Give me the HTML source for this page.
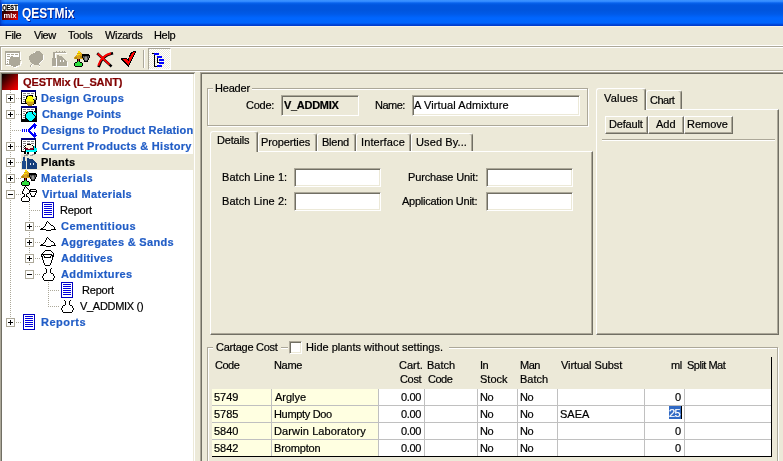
<!DOCTYPE html>
<html>
<head>
<meta charset="utf-8">
<title>QESTMix</title>
<style>
*{box-sizing:border-box;margin:0;padding:0}
html,body{width:783px;height:461px;overflow:hidden;background:#ECE9D8}
body{-webkit-text-stroke:0.2px;position:relative;font-family:"Liberation Sans",sans-serif;font-size:11px;color:#000;line-height:13px}
#app{position:absolute;left:0;top:0;width:783px;height:461px;overflow:hidden;background:#ECE9D8;will-change:transform}
.a{position:absolute;white-space:nowrap}
svg{position:absolute;overflow:visible}
#title{left:0;top:0;width:783px;height:26px;background:linear-gradient(to bottom,#3D95FF 0px,#2F88FF 1.5px,#0762EC 3px,#0055DE 5px,#0055DD 10px,#005AE8 14px,#0066FF 18px,#0065FC 23px,#0048DA 24.5px,#0038C6 26px)}
#title .t{-webkit-text-stroke:0;left:21.5px;top:4px;font-size:14.5px;line-height:18px;font-weight:bold;color:#fff;text-shadow:1px 1px 0 #0A1883;transform-origin:0 0;transform:scaleX(.825)}
.tl{height:16px;line-height:16px}
.b{color:#215DC6}
.dv{width:1px;background-image:linear-gradient(to bottom,#ACA899 50%,transparent 50%);background-size:1px 2px}
.dh{height:1px;background-image:linear-gradient(to right,#ACA899 50%,transparent 50%);background-size:2px 1px}
.pm{width:9px;height:9px;border:1px solid #ACA899;background:#fff}
.pm i{position:absolute;left:1px;top:3px;width:5px;height:1px;background:#000}
.pm b{position:absolute;left:3px;top:1px;width:1px;height:5px;background:#000}
.in{border:1px solid;border-color:#ACA899 #fff #fff #ACA899;background:#fff;box-shadow:inset 1px 1px 0 #716F64,inset -1px -1px 0 #ECE9D8}
.tab{border:1px solid;border-color:#fff #716F64 transparent #fff;border-bottom:0;border-radius:3px 3px 0 0;box-shadow:inset -1px 0 0 #ACA899;background:#ECE9D8}
.pan{border:1px solid;border-color:#fff #716F64 #716F64 #fff;box-shadow:inset -1px -1px 0 #ACA899}
.btn{border:1px solid;border-color:#fff #716F64 #716F64 #fff;box-shadow:inset -1px -1px 0 #ACA899}
.gb{border:1px solid #ACA899;box-shadow:inset 1px 1px 0 #fff,1px 1px 0 #fff}
.th{line-height:14px}
.td{height:16px;line-height:16px}
</style>
</head>
<body>
<div id="app">

<div id="title" class="a">
<div class="a" style="left:0;top:0;width:5px;height:26px;background:linear-gradient(to right,rgba(0,25,150,.6) 0,rgba(0,40,180,.25) 2px,rgba(0,40,180,0) 5px)"></div>
<div class="a" style="left:2px;top:4px;width:16px;height:7px;background:#fff"></div>
<div class="a" style="left:2px;top:11px;width:16px;height:9px;background:linear-gradient(135deg,#200000 0%,#700000 45%,#F00000 100%)"></div>
<svg style="left:2px;top:4px" width="16" height="16" viewBox="0 0 16 16">
<text x="0.2" y="6.2" font-family="Liberation Sans,sans-serif" font-weight="bold" font-size="7" fill="#000" stroke="#000" stroke-width="0.3" textLength="15.4" lengthAdjust="spacingAndGlyphs">QEST</text>
<text x="1.5" y="14" font-family="Liberation Sans,sans-serif" font-weight="bold" font-size="7.5" fill="#fff" textLength="13" lengthAdjust="spacingAndGlyphs">mix</text>
</svg>
<div class="a t">QESTMix</div>
</div>

<div class="a" style="left:0px;top:26px;width:783px;height:1px;background:#F6F4EA"></div>
<div class="a" style="left:5px;top:29px;letter-spacing:-0.33px;">File</div>
<div class="a" style="left:34px;top:29px;letter-spacing:-0.50px;">View</div>
<div class="a" style="left:68px;top:29px;letter-spacing:-0.25px;">Tools</div>
<div class="a" style="left:105px;top:29px;letter-spacing:-0.33px;">Wizards</div>
<div class="a" style="left:154px;top:29px;letter-spacing:-0.33px;">Help</div>
<div class="a" style="left:0px;top:45px;width:783px;height:1px;background:#FFFFFF"></div>
<div class="a" style="left:0px;top:46px;width:783px;height:1px;background:#ACA899"></div>
<div class="a" style="left:1px;top:47px;width:782px;height:1px;background:#FFFFFF"></div>
<div class="a" style="left:0px;top:46px;width:1px;height:25px;background:#ACA899"></div>
<div class="a" style="left:1px;top:47px;width:1px;height:23px;background:#FFFFFF"></div>
<div class="a" style="left:0px;top:70px;width:783px;height:1px;background:#ACA899"></div>
<div class="a" style="left:0px;top:71px;width:783px;height:1px;background:#FFFFFF"></div>
<svg style="left:5px;top:51px" width="17" height="17" viewBox="0 0 17 17" shape-rendering="crispEdges">
<path d="M1 1h15v14h-15z" fill="#fff"/>
<path d="M6 6h6v1h2v1h1v1h1v3h-1v2h-2v1h-2v1h-3v-1h-2v-2h-2v-5h2v-1h1z" fill="#fff" transform="translate(1,1)"/>
<rect x="0" y="0" width="15" height="14" fill="#ACA899"/>
<rect x="1" y="2" width="13" height="11" fill="#fff"/>
<path d="M2 3h3v1h-3zM6 3h3v1h-3zM10 3h3v1h-3zM2 5h3v1h-3zM6 5h2v1h-2zM5 6h9v7h-9zM2 8h2v1h-2zM2 10h1v1h-1zM2 12h1v1h-1z" fill="#ACA899"/>
<path d="M6 6h6v1h2v1h1v1h1v3h-1v2h-2v1h-2v1h-3v-1h-2v-2h-2v-5h2v-1h1z" fill="#ACA899"/>
<path d="M15 10h1v2h-1zM13 14h2v1h-2z" fill="#ECE9D8"/>
</svg>
<svg style="left:28px;top:51px" width="16" height="17" viewBox="0 0 16 17" shape-rendering="crispEdges">
<path d="M6 1h6v1h2v1h1v1h1v5h-1v1h-1v1h-1v1h-1v1h-1v1h1v2h-1v-2h-1v-1h-5v1h-1v2h-1v-2h1v-2h-1v-2h-1v-5h1v-1h2v-1h2z" fill="#fff"/>
<path d="M7 0h5v1h1v1h1v1h1v6h-1v1h-1v1h-1v1h-1v1h-1v1h-4v-1h-2v-1h-1v-1h-1v-2h-1v-4h1v-1h1v-1h2v-1h2v-1h1z" fill="#ACA899"/>
<path d="M3 13h1v1h-1zM2 14h1v2h-1zM10 13h1v1h-1zM11 14h1v1h-1z" fill="#ACA899"/>
</svg>
<svg style="left:52px;top:51px" width="17" height="17" viewBox="0 0 17 17" shape-rendering="crispEdges">
<path d="M1 1h2v7h-2zM0 7h4v8h-4zM3 1h11v1h-11zM4 0h1v1h-1zM7 0h1v1h-1zM10 0h1v1h-1zM12 0h1v1h-1zM5 4h2v1h3v1h1v1h1v1h1v1h1v1h1v5h-10z" fill="#fff" transform="translate(1,1)"/>
<path d="M1 1h2v7h-2zM0 7h4v8h-4zM3 1h11v1h-11zM4 0h1v1h-1zM7 0h1v1h-1zM10 0h1v1h-1zM12 0h1v1h-1zM5 4h2v1h3v1h1v1h1v1h1v1h1v1h1v5h-10z" fill="#ACA899"/>
<path d="M8 9h1v2h-1zM11 9h1v2h-1z" fill="#fff"/>
</svg>
<svg style="left:74px;top:51px" width="16" height="16" viewBox="0 0 16 16" shape-rendering="crispEdges">
<path d="M4 0h2v1h1v1h1v2h1v1h1v3h-10v-2h1v-1h1v-1h1v-2h1z" fill="#D8A020"/><path d="M3 4h1v1h-1zM6 2h1v1h-1zM7 5h1v1h-1z" fill="#F0D000"/>
<path d="M4 0h2v2h-2zM3 3h3v1h-3z" fill="#FFE000"/>
<path d="M1 6h2v2h-2zM6 5h2v2h-2z" fill="#B08810"/>
<path d="M8 3h7v1h1v3h-1v2h-1v2h-4v-2h-1v-2h-1z" fill="#000"/><path d="M9 5h6v2h-1v2h-1v1h-2v-1h-1v-2h-1z" fill="#606060"/><path d="M11 6h2v3h-2z" fill="#989898"/><path d="M10 5h1v1h-1zM13 5h1v2h-1z" fill="#303030"/>
<path d="M3 8h3v3h2v1h1v3h-1v1h-7v-1h-1v-3h1v-1h2z" fill="#000"/>
<path d="M4 10h1v1h1v1h2v3h-7v-3h2v-1h1z" fill="#30E040"/>
<path d="M4 8h1v2h-1z" fill="#C02020"/>
</svg>
<svg style="left:96px;top:51px" width="18" height="17" viewBox="0 0 18 17">
<path d="M2.2 3.2L14.6 14.6M15.8 2.6C9.5 4 5 8.5 3 15" stroke="#000" stroke-width="2.6" fill="none" stroke-linecap="square"/>
<path d="M1.8 2.6L13.6 13.6M15 2.2C9 3.6 4.4 8 2.3 14.6" stroke="#F00" stroke-width="1.9" fill="none" stroke-linecap="butt"/>
</svg>
<svg style="left:121px;top:51px" width="15" height="16" viewBox="0 0 16 16" preserveAspectRatio="none" shape-rendering="crispEdges">
<path d="M13 0h3v2h-1v2h-1v2h-1v2h-1v2h-1v2h-1v2h-1v2h-2v-1h-1v-1h-1v-1h-1v-1h-1v-1h-1v-1h-1v-1h-1v-2h6v1h1v-1h1v-2h1v-1h1v-2h1v-1h1z" fill="#000"/>
<path d="M13 1h2v1h-1v2h-1v2h-1v2h-1v2h-1v2h-1v2h-2v-1h-1v-1h-1v-1h-1v-1h-1v-1h-1v-1h4v1h1v1h1v-2h1v-2h1v-1h1v-2h1v-1h1z" fill="#F00"/>
</svg>
<div class="a" style="left:143px;top:50px;width:1px;height:18px;background:#ACA899"></div>
<div class="a" style="left:144px;top:50px;width:1px;height:18px;background:#fff"></div>
<div class="a" style="left:148px;top:48px;width:23px;height:22px;border:1px solid;border-color:#ACA899 #fff #fff #ACA899;background-color:#ECE9D8;background-image:linear-gradient(45deg,#fff 25%,transparent 25%,transparent 75%,#fff 75%),linear-gradient(45deg,#fff 25%,transparent 25%,transparent 75%,#fff 75%);background-size:2px 2px;background-position:0 0,1px 1px"></div>
<svg style="left:152px;top:53px" width="14" height="14" viewBox="0 0 14 14" shape-rendering="crispEdges">
<path d="M0 0h2v1h-2zM2 0h1v14h-1zM3 13h2v1h-2zM5 4h1v6h-1zM6 9h1v1h-1z" fill="#000"/>
<path d="M2 0h5v2h-5zM5 3h5v2h-5zM7 6h5v2h-5zM7 9h5v2h-5zM5 12h5v2h-5z" fill="#00F"/>
</svg>

<div class="a" style="left:0px;top:72px;width:195px;height:389px;background:#fff;border-top:2px solid;border-left:2px solid;border-right:1px solid #fff;border-color:#716F64 #fff #716F64 #716F64"></div>
<div class="a" style="left:0px;top:72px;width:195px;height:1px;background:#ACA899"></div>
<div class="a" style="left:0px;top:72px;width:1px;height:389px;background:#ACA899"></div>
<div class="a" style="left:193px;top:74px;width:1px;height:387px;background:#ECE9D8"></div>
<div class="a dv" style="left:10px;top:90px;width:1px;height:228px;"></div>
<div class="a dv" style="left:29px;top:202px;width:1px;height:64px;"></div>
<div class="a dv" style="left:48px;top:282px;width:1px;height:25px;"></div>
<div class="a dh" style="left:16px;top:98px;width:5px;height:1px;"></div>
<div class="a dh" style="left:16px;top:114px;width:5px;height:1px;"></div>
<div class="a dh" style="left:12px;top:130px;width:9px;height:1px;"></div>
<div class="a dh" style="left:16px;top:146px;width:5px;height:1px;"></div>
<div class="a dh" style="left:16px;top:162px;width:5px;height:1px;"></div>
<div class="a dh" style="left:16px;top:178px;width:5px;height:1px;"></div>
<div class="a dh" style="left:16px;top:194px;width:5px;height:1px;"></div>
<div class="a dh" style="left:16px;top:322px;width:5px;height:1px;"></div>
<div class="a dh" style="left:31px;top:210px;width:9px;height:1px;"></div>
<div class="a dh" style="left:35px;top:226px;width:5px;height:1px;"></div>
<div class="a dh" style="left:35px;top:242px;width:5px;height:1px;"></div>
<div class="a dh" style="left:35px;top:258px;width:5px;height:1px;"></div>
<div class="a dh" style="left:35px;top:274px;width:5px;height:1px;"></div>
<div class="a dh" style="left:50px;top:290px;width:9px;height:1px;"></div>
<div class="a dh" style="left:50px;top:306px;width:9px;height:1px;"></div>
<div class="a pm" style="left:6px;top:94px"><i></i><b></b></div>
<div class="a pm" style="left:6px;top:110px"><i></i><b></b></div>
<div class="a pm" style="left:6px;top:142px"><i></i><b></b></div>
<div class="a pm" style="left:6px;top:158px"><i></i><b></b></div>
<div class="a pm" style="left:6px;top:174px"><i></i><b></b></div>
<div class="a pm" style="left:6px;top:318px"><i></i><b></b></div>
<div class="a pm" style="left:6px;top:190px"><i></i></div>
<div class="a pm" style="left:25px;top:222px"><i></i><b></b></div>
<div class="a pm" style="left:25px;top:238px"><i></i><b></b></div>
<div class="a pm" style="left:25px;top:254px"><i></i><b></b></div>
<div class="a pm" style="left:25px;top:270px"><i></i></div>
<div class="a" style="left:21px;top:154px;width:172px;height:16px;background:#ECE9D8"></div>
<div class="a" style="left:2px;top:74px;width:16px;height:16px;background:linear-gradient(135deg,#000 0%,#5A0000 35%,#B00000 65%,#FF0000 100%)"></div>
<svg style="left:21px;top:90px" width="16" height="16" viewBox="0 0 16 16" shape-rendering="crispEdges"><path d="M0 0h15v1h-15zM0 1h15v1h-15z" fill="#000080"/><path d="M0 2h1v1h-1zM14 2h1v1h-1zM0 3h1v1h-1zM14 3h1v1h-1zM0 4h1v1h-1zM14 4h1v1h-1zM0 5h1v1h-1zM8 5h4v1h-4zM14 5h1v1h-1zM0 6h1v1h-1zM5 6h2v1h-2zM11 6h1v1h-1zM14 6h2v1h-2zM0 7h1v1h-1zM5 7h1v1h-1zM15 7h1v1h-1zM0 8h1v1h-1zM5 8h1v1h-1zM15 8h1v1h-1zM0 9h1v1h-1zM4 9h1v1h-1zM12 9h1v1h-1zM15 9h1v1h-1zM0 10h1v1h-1zM4 10h1v1h-1zM13 10h2v1h-2zM0 11h1v1h-1zM4 11h1v1h-1zM13 11h2v1h-2zM0 12h1v1h-1zM4 12h1v1h-1zM13 12h2v1h-2zM0 13h6v1h-6zM13 13h2v1h-2zM12 14h1v1h-1z" fill="#000"/><path d="M1 2h13v1h-13zM1 3h1v1h-1zM5 3h1v1h-1zM9 3h1v1h-1zM13 3h1v1h-1zM1 4h13v1h-13zM1 5h1v1h-1zM5 5h1v1h-1zM12 5h2v1h-2zM1 6h4v1h-4zM13 6h1v1h-1zM1 7h1v1h-1zM4 7h1v1h-1zM1 8h4v1h-4zM1 9h1v1h-1zM1 10h3v1h-3zM1 11h1v1h-1zM1 12h3v1h-3z" fill="#fff"/><path d="M2 3h3v1h-3zM6 3h3v1h-3zM10 3h3v1h-3zM2 5h3v1h-3zM6 5h2v1h-2zM2 7h2v1h-2zM2 9h2v1h-2zM2 11h2v1h-2z" fill="#808080"/><path d="M7 6h4v1h-4zM6 7h6v1h-6zM6 8h6v1h-6zM5 9h7v1h-7zM5 10h8v1h-8z" fill="#FFFF00"/><path d="M12 6h1v1h-1zM12 7h3v1h-3zM12 8h2v1h-2z" fill="#FFFF99"/><path d="M14 8h1v1h-1zM13 9h2v1h-2z" fill="#A0A0A0"/><path d="M5 11h8v1h-8z" fill="#F0D818"/><path d="M5 12h8v1h-8zM6 13h7v1h-7z" fill="#D0A818"/><path d="M6 14h6v1h-6zM7 15h4v1h-4z" fill="#B08810"/></svg>
<svg style="left:21px;top:106px" width="16" height="16" viewBox="0 0 16 16" shape-rendering="crispEdges"><path d="M0 0h16v1h-16zM0 1h16v1h-16z" fill="#000080"/><path d="M0 2h1v1h-1zM14 2h2v1h-2zM0 3h1v1h-1zM14 3h2v1h-2zM0 4h1v1h-1zM14 4h2v1h-2zM0 5h1v1h-1zM8 5h4v1h-4zM13 5h3v1h-3zM0 6h1v1h-1zM5 6h2v1h-2zM11 6h1v1h-1zM14 6h2v1h-2zM0 7h1v1h-1zM5 7h1v1h-1zM11 7h1v1h-1zM15 7h1v1h-1zM0 8h1v1h-1zM4 8h1v1h-1zM12 8h1v1h-1zM15 8h1v1h-1zM0 9h1v1h-1zM4 9h1v1h-1zM13 9h1v1h-1zM15 9h1v1h-1zM0 10h1v1h-1zM4 10h1v1h-1zM14 10h2v1h-2zM0 11h1v1h-1zM4 11h1v1h-1zM14 11h2v1h-2zM0 12h1v1h-1zM4 12h2v1h-2zM13 12h3v1h-3zM0 13h7v1h-7zM12 13h4v1h-4zM0 14h8v1h-8zM11 14h5v1h-5zM0 15h16v1h-16z" fill="#000"/><path d="M1 2h13v1h-13zM1 3h1v1h-1zM5 3h1v1h-1zM9 3h1v1h-1zM13 3h1v1h-1zM1 4h13v1h-13zM1 5h1v1h-1zM5 5h1v1h-1zM12 5h1v1h-1zM1 6h4v1h-4zM1 7h1v1h-1zM4 7h1v1h-1zM1 8h3v1h-3zM1 9h1v1h-1zM1 10h3v1h-3zM1 11h1v1h-1zM1 12h3v1h-3z" fill="#fff"/><path d="M2 3h3v1h-3zM6 3h3v1h-3zM10 3h3v1h-3zM2 5h3v1h-3zM6 5h2v1h-2zM2 7h2v1h-2zM2 9h2v1h-2zM2 11h2v1h-2z" fill="#808080"/><path d="M7 6h4v1h-4zM12 6h2v1h-2zM6 7h5v1h-5zM12 7h3v1h-3zM5 8h7v1h-7zM13 8h2v1h-2zM5 9h8v1h-8zM5 10h9v1h-9zM5 11h9v1h-9zM6 12h7v1h-7zM7 13h5v1h-5zM8 14h3v1h-3z" fill="#00FFFF"/><path d="M14 9h1v1h-1z" fill="#A0A0A0"/></svg>
<svg style="left:21px;top:122px" width="16" height="16" viewBox="0 0 16 16" shape-rendering="crispEdges"><path d="M13 1h1v1h-1zM12 2h3v1h-3zM11 3h5v1h-5zM10 4h5v1h-5zM9 5h3v1h-3zM13 5h2v1h-2zM8 6h3v1h-3zM13 6h1v1h-1zM1 7h1v1h-1zM3 7h1v1h-1zM5 7h1v1h-1zM7 7h3v1h-3zM1 8h1v1h-1zM3 8h1v1h-1zM5 8h1v1h-1zM7 8h2v1h-2zM1 9h1v1h-1zM3 9h1v1h-1zM5 9h1v1h-1zM7 9h3v1h-3zM8 10h3v1h-3zM13 10h1v1h-1zM9 11h3v1h-3zM13 11h2v1h-2zM10 12h5v1h-5zM11 13h5v1h-5zM12 14h3v1h-3zM13 15h1v1h-1z" fill="#00F"/></svg>
<svg style="left:21px;top:138px" width="16" height="16" viewBox="0 0 16 16" shape-rendering="crispEdges"><path d="M0 0h15v1h-15zM0 1h15v1h-15z" fill="#000080"/><path d="M0 2h1v1h-1zM14 2h1v1h-1zM0 3h1v1h-1zM14 3h1v1h-1zM0 4h1v1h-1zM14 4h1v1h-1zM0 5h1v1h-1zM14 5h1v1h-1zM0 6h1v1h-1zM6 6h4v1h-4zM14 6h1v1h-1zM0 7h1v1h-1zM4 7h1v1h-1zM11 7h1v1h-1zM14 7h1v1h-1zM0 8h1v1h-1zM3 8h1v1h-1zM12 8h1v1h-1zM14 8h1v1h-1zM0 9h1v1h-1zM4 9h1v1h-1zM12 9h1v1h-1zM14 9h1v1h-1zM0 10h1v1h-1zM3 10h1v1h-1zM0 11h1v1h-1zM4 11h1v1h-1zM12 11h1v1h-1zM0 12h1v1h-1zM4 12h1v1h-1zM0 13h5v1h-5zM15 13h1v1h-1zM3 14h2v1h-2zM6 14h2v1h-2zM13 14h2v1h-2zM3 15h2v1h-2zM6 15h2v1h-2zM13 15h2v1h-2z" fill="#000"/><path d="M1 2h13v1h-13zM1 3h1v1h-1zM5 3h1v1h-1zM9 3h1v1h-1zM13 3h1v1h-1zM1 4h13v1h-13zM1 5h1v1h-1zM5 5h1v1h-1zM9 5h1v1h-1zM13 5h1v1h-1zM1 6h5v1h-5zM10 6h4v1h-4zM1 7h1v1h-1zM3 7h1v1h-1zM12 7h2v1h-2zM1 8h2v1h-2zM1 9h1v1h-1zM3 9h1v1h-1zM1 10h2v1h-2zM1 11h1v1h-1zM3 11h1v1h-1zM1 12h3v1h-3z" fill="#fff"/><path d="M2 3h3v1h-3zM6 3h3v1h-3zM10 3h3v1h-3zM2 5h3v1h-3zM6 5h3v1h-3zM10 5h3v1h-3zM2 7h1v1h-1zM2 9h1v1h-1zM2 11h1v1h-1z" fill="#808080"/><path d="M5 7h6v1h-6zM4 8h8v1h-8zM5 9h7v1h-7zM7 10h2v1h-2z" fill="#FFF4DC"/><path d="M13 8h1v1h-1zM13 9h1v1h-1zM13 10h3v1h-3zM13 11h3v1h-3zM5 12h11v1h-11zM5 13h10v1h-10z" fill="#00FFFF"/><path d="M4 10h3v1h-3zM9 10h4v1h-4zM5 11h7v1h-7z" fill="#800028"/></svg>
<svg style="left:21px;top:154px" width="16" height="16" viewBox="0 0 16 16" shape-rendering="crispEdges"><path d="M3 1h2v-1h3v1h3v-1h3v1h-2v1h-3v-1h-2v1h-3v1h-1z" fill="#A0A0A0"/><path d="M2 3h2v4h1v8h-4v-8h1z" fill="#1C4A8C"/><path d="M6 4h2v1h4v1h1v1h1v1h1v1h1v6h-10z" fill="#153E7A"/><path d="M9 9h1v2h-1zM12 9h1v2h-1z" fill="#E0E8F0"/></svg>
<svg style="left:21px;top:170px" width="16" height="16" viewBox="0 0 16 16" shape-rendering="crispEdges"><path d="M4 0h2v1h1v1h1v2h1v1h1v3h-10v-2h1v-1h1v-1h1v-2h1z" fill="#D8A020"/><path d="M3 4h1v1h-1zM6 2h1v1h-1zM7 5h1v1h-1z" fill="#F0D000"/><path d="M4 0h2v2h-2zM3 3h3v1h-3z" fill="#FFE000"/><path d="M1 6h2v2h-2zM6 5h2v2h-2z" fill="#B08810"/><path d="M8 3h7v1h1v3h-1v2h-1v2h-4v-2h-1v-2h-1z" fill="#000"/><path d="M9 5h6v2h-1v2h-1v1h-2v-1h-1v-2h-1z" fill="#606060"/><path d="M11 6h2v3h-2z" fill="#989898"/><path d="M10 5h1v1h-1zM13 5h1v2h-1z" fill="#303030"/><path d="M3 8h3v3h2v1h1v3h-1v1h-7v-1h-1v-3h1v-1h2z" fill="#000"/><path d="M4 10h1v1h1v1h2v3h-7v-3h2v-1h1z" fill="#30E040"/><path d="M4 8h1v2h-1z" fill="#C02020"/></svg>
<svg style="left:21px;top:186px" width="16" height="16" viewBox="0 0 16 16" shape-rendering="crispEdges"><path d="M4 0h1v1h-1zM3 1h1v1h-1zM5 1h1v1h-1zM3 2h1v1h-1zM6 2h1v1h-1zM2 3h1v1h-1zM7 3h1v1h-1zM9 3h6v1h-6zM2 4h1v1h-1zM8 4h2v1h-2zM15 4h1v1h-1zM1 5h1v1h-1zM8 5h8v1h-8zM1 6h1v1h-1zM8 6h1v1h-1zM15 6h1v1h-1zM1 7h2v1h-2zM6 7h2v1h-2zM9 7h1v1h-1zM14 7h1v1h-1zM3 8h1v1h-1zM5 8h1v1h-1zM9 8h1v1h-1zM14 8h1v1h-1zM3 9h1v1h-1zM5 9h1v1h-1zM10 9h1v1h-1zM13 9h1v1h-1zM2 10h2v1h-2zM5 10h2v1h-2zM10 10h4v1h-4zM1 11h1v1h-1zM7 11h1v1h-1zM0 12h1v1h-1zM8 12h1v1h-1zM0 13h1v1h-1zM8 13h1v1h-1zM0 14h1v1h-1zM8 14h1v1h-1zM1 15h7v1h-7z" fill="#000"/></svg>
<svg style="left:42px;top:202px" width="12" height="16" viewBox="0 0 12 16" shape-rendering="crispEdges"><rect x="0" y="0" width="12" height="16" fill="#0000C0"/><rect x="1" y="1" width="10" height="14" fill="#fff"/><rect x="2" y="2" width="8" height="1" fill="#0000E0"/><rect x="2" y="4" width="8" height="1" fill="#0000E0"/><rect x="2" y="6" width="8" height="1" fill="#0000E0"/><rect x="2" y="8" width="8" height="1" fill="#0000E0"/><rect x="2" y="10" width="8" height="1" fill="#0000E0"/><rect x="2" y="12" width="8" height="1" fill="#0000E0"/></svg>
<svg style="left:61px;top:282px" width="12" height="16" viewBox="0 0 12 16" shape-rendering="crispEdges"><rect x="0" y="0" width="12" height="16" fill="#0000C0"/><rect x="1" y="1" width="10" height="14" fill="#fff"/><rect x="2" y="2" width="8" height="1" fill="#0000E0"/><rect x="2" y="4" width="8" height="1" fill="#0000E0"/><rect x="2" y="6" width="8" height="1" fill="#0000E0"/><rect x="2" y="8" width="8" height="1" fill="#0000E0"/><rect x="2" y="10" width="8" height="1" fill="#0000E0"/><rect x="2" y="12" width="8" height="1" fill="#0000E0"/></svg>
<svg style="left:23px;top:314px" width="12" height="16" viewBox="0 0 12 16" shape-rendering="crispEdges"><rect x="0" y="0" width="12" height="16" fill="#0000C0"/><rect x="1" y="1" width="10" height="14" fill="#fff"/><rect x="2" y="2" width="8" height="1" fill="#0000E0"/><rect x="2" y="4" width="8" height="1" fill="#0000E0"/><rect x="2" y="6" width="8" height="1" fill="#0000E0"/><rect x="2" y="8" width="8" height="1" fill="#0000E0"/><rect x="2" y="10" width="8" height="1" fill="#0000E0"/><rect x="2" y="12" width="8" height="1" fill="#0000E0"/></svg>
<svg style="left:40px;top:221px" width="16" height="10" viewBox="0 0 16 10" shape-rendering="crispEdges"><path d="M7 0h1v1h-1zM6 1h1v1h-1zM8 1h1v1h-1zM6 2h1v1h-1zM9 2h1v1h-1zM5 3h1v1h-1zM10 3h1v1h-1zM5 4h1v1h-1zM11 4h2v1h-2zM4 5h1v1h-1zM13 5h1v1h-1zM3 6h1v1h-1zM14 6h1v1h-1zM1 7h2v1h-2zM14 7h1v1h-1zM0 8h6v1h-6zM11 8h5v1h-5zM6 9h5v1h-5z" fill="#000"/></svg>
<svg style="left:40px;top:237px" width="16" height="10" viewBox="0 0 16 10" shape-rendering="crispEdges"><path d="M7 0h1v1h-1zM6 1h1v1h-1zM8 1h1v1h-1zM6 2h1v1h-1zM9 2h1v1h-1zM5 3h1v1h-1zM10 3h1v1h-1zM5 4h1v1h-1zM11 4h2v1h-2zM4 5h1v1h-1zM13 5h1v1h-1zM3 6h1v1h-1zM14 6h1v1h-1zM1 7h2v1h-2zM14 7h1v1h-1zM0 8h6v1h-6zM11 8h5v1h-5zM6 9h5v1h-5z" fill="#000"/></svg>
<svg style="left:41px;top:250px" width="13" height="16" viewBox="0 0 13 16" shape-rendering="crispEdges"><path d="M4 0h6v1h-6zM3 1h1v1h-1zM10 1h1v1h-1zM2 2h1v1h-1zM11 2h1v1h-1zM1 3h1v1h-1zM12 3h1v1h-1zM0 4h11v1h-11zM12 4h1v1h-1zM0 5h1v1h-1zM2 5h1v1h-1zM10 5h3v1h-3zM0 6h2v1h-2zM3 6h1v1h-1zM9 6h1v1h-1zM11 6h2v1h-2zM1 7h1v1h-1zM3 7h7v1h-7zM11 7h1v1h-1zM1 8h1v1h-1zM11 8h1v1h-1zM1 9h1v1h-1zM11 9h1v1h-1zM2 10h1v1h-1zM10 10h1v1h-1zM2 11h1v1h-1zM10 11h1v1h-1zM2 12h1v1h-1zM10 12h1v1h-1zM3 13h1v1h-1zM9 13h1v1h-1zM3 14h1v1h-1zM9 14h1v1h-1zM4 15h5v1h-5z" fill="#000"/></svg>
<svg style="left:42px;top:268px" width="13" height="13" viewBox="0 0 13 13" shape-rendering="crispEdges"><path d="M3 0h1v1h-1zM9 0h1v1h-1zM4 1h1v1h-1zM8 1h1v1h-1zM4 2h1v1h-1zM8 2h1v1h-1zM4 3h1v1h-1zM8 3h1v1h-1zM4 4h1v1h-1zM8 4h1v1h-1zM2 5h2v1h-2zM9 5h2v1h-2zM1 6h1v1h-1zM11 6h1v1h-1zM1 7h1v1h-1zM11 7h1v1h-1zM0 8h1v1h-1zM12 8h1v1h-1zM0 9h1v1h-1zM12 9h1v1h-1zM1 10h1v1h-1zM11 10h1v1h-1zM1 11h1v1h-1zM11 11h1v1h-1zM2 12h9v1h-9z" fill="#000"/></svg>
<svg style="left:61px;top:300px" width="13" height="13" viewBox="0 0 13 13" shape-rendering="crispEdges"><path d="M3 0h1v1h-1zM9 0h1v1h-1zM4 1h1v1h-1zM8 1h1v1h-1zM4 2h1v1h-1zM8 2h1v1h-1zM4 3h1v1h-1zM8 3h1v1h-1zM4 4h1v1h-1zM8 4h1v1h-1zM2 5h2v1h-2zM9 5h2v1h-2zM1 6h1v1h-1zM11 6h1v1h-1zM1 7h1v1h-1zM11 7h1v1h-1zM0 8h1v1h-1zM12 8h1v1h-1zM0 9h1v1h-1zM12 9h1v1h-1zM1 10h1v1h-1zM11 10h1v1h-1zM1 11h1v1h-1zM11 11h1v1h-1zM2 12h9v1h-9z" fill="#000"/></svg>

<div class="a tl b" style="left:23px;top:74px;letter-spacing:-0.13px;font-weight:bold;color:#800000">QESTMix (L_SANT)</div>
<div class="a tl b" style="left:41px;top:90px;letter-spacing:0.33px;font-weight:bold;">Design Groups</div>
<div class="a tl b" style="left:42px;top:106px;letter-spacing:0.17px;font-weight:bold;">Change Points</div>
<div class="a tl b" style="left:41px;top:122px;letter-spacing:0.19px;font-weight:bold;">Designs to Product Relation</div>
<div class="a tl b" style="left:42px;top:138px;letter-spacing:0.28px;font-weight:bold;">Current Products &amp; History</div>
<div class="a tl b" style="left:41px;top:154px;letter-spacing:0.20px;font-weight:bold;color:#000">Plants</div>
<div class="a tl b" style="left:41px;top:170px;letter-spacing:0.50px;font-weight:bold;">Materials</div>
<div class="a tl b" style="left:42px;top:186px;letter-spacing:0.31px;font-weight:bold;">Virtual Materials</div>
<div class="a tl" style="left:60px;top:202px;letter-spacing:-0.20px;">Report</div>
<div class="a tl b" style="left:61px;top:218px;letter-spacing:0.45px;font-weight:bold;">Cementitious</div>
<div class="a tl b" style="left:61px;top:234px;letter-spacing:0.29px;font-weight:bold;">Aggregates &amp; Sands</div>
<div class="a tl b" style="left:61px;top:250px;letter-spacing:0.25px;font-weight:bold;">Additives</div>
<div class="a tl b" style="left:61px;top:266px;letter-spacing:0.40px;font-weight:bold;">Addmixtures</div>
<div class="a tl" style="left:82px;top:282px;letter-spacing:-0.20px;">Report</div>
<div class="a tl" style="left:80px;top:298px;letter-spacing:-0.30px;">V_ADDMIX ()</div>
<div class="a tl b" style="left:41px;top:314px;letter-spacing:0.50px;font-weight:bold;">Reports</div>
<div class="a" style="left:200px;top:72px;width:583px;height:1px;background:#ACA899"></div>
<div class="a" style="left:201px;top:73px;width:582px;height:1px;background:#716F64"></div>
<div class="a" style="left:200px;top:72px;width:1px;height:389px;background:#ACA899"></div>
<div class="a" style="left:201px;top:73px;width:1px;height:388px;background:#716F64"></div>
<div class="a gb" style="left:207px;top:88px;width:381px;height:38px;"></div>
<div class="a" style="left:213px;top:84px;width:39px;height:10px;background:#ECE9D8"></div>
<div class="a" style="left:215px;top:82px;letter-spacing:-0.20px;">Header</div>
<div class="a" style="left:246px;top:99px;letter-spacing:-0.25px;">Code:</div>
<div class="a in" style="left:281px;top:95px;width:78px;height:21px;background:#ECE9D8"></div>
<div class="a" style="left:284px;top:99px;letter-spacing:-0.29px;font-weight:bold;">V_ADDMIX</div>
<div class="a" style="left:375px;top:99px;letter-spacing:-0.50px;">Name:</div>
<div class="a in" style="left:412px;top:95px;width:168px;height:21px;"></div>
<div class="a" style="left:414px;top:99px;letter-spacing:0.11px;">A Virtual Admixture</div>
<div class="a pan" style="left:210px;top:151px;width:383px;height:184px;"></div>
<div class="a tab" style="left:258px;top:133px;width:59px;height:18px;"></div>
<div class="a" style="left:261px;top:136px;letter-spacing:-0.11px;">Properties</div>
<div class="a tab" style="left:317px;top:133px;width:39px;height:18px;"></div>
<div class="a" style="left:322px;top:136px;letter-spacing:-0.25px;">Blend</div>
<div class="a tab" style="left:356px;top:133px;width:55px;height:18px;"></div>
<div class="a" style="left:361px;top:136px;letter-spacing:0.12px;">Interface</div>
<div class="a tab" style="left:411px;top:133px;width:62px;height:18px;"></div>
<div class="a" style="left:416px;top:136px;letter-spacing:0.11px;">Used By...</div>
<div class="a tab" style="left:210px;top:131px;width:48px;height:21px;"></div>
<div class="a" style="left:217px;top:134px;letter-spacing:-0.17px;">Details</div>
<div class="a" style="left:222px;top:171px;letter-spacing:0.08px;">Batch Line 1:</div>
<div class="a" style="left:222px;top:195px;letter-spacing:0.08px;">Batch Line 2:</div>
<div class="a in" style="left:294px;top:168px;width:87px;height:19px;"></div>
<div class="a in" style="left:294px;top:192px;width:87px;height:19px;"></div>
<div class="a" style="left:408px;top:171px;letter-spacing:-0.15px;">Purchase Unit:</div>
<div class="a" style="left:402px;top:195px;letter-spacing:-0.25px;">Application Unit:</div>
<div class="a in" style="left:486px;top:168px;width:87px;height:19px;"></div>
<div class="a in" style="left:486px;top:192px;width:87px;height:19px;"></div>
<div class="a pan" style="left:596px;top:109px;width:183px;height:226px;"></div>
<div class="a tab" style="left:646px;top:90px;width:36px;height:19px;"></div>
<div class="a" style="left:650px;top:94px;letter-spacing:-0.50px;">Chart</div>
<div class="a tab" style="left:596px;top:88px;width:50px;height:22px;"></div>
<div class="a" style="left:604px;top:92px;letter-spacing:0.20px;">Values</div>
<div class="a btn" style="left:605px;top:116px;width:43px;height:18px;"></div>
<div class="a" style="left:609px;top:118px;letter-spacing:-0.17px;">Default</div>
<div class="a btn" style="left:648px;top:116px;width:36px;height:18px;"></div>
<div class="a" style="left:656px;top:118px;letter-spacing:0.00px;">Add</div>
<div class="a btn" style="left:684px;top:116px;width:49px;height:18px;"></div>
<div class="a" style="left:687px;top:118px;letter-spacing:0.00px;">Remove</div>
<div class="a" style="left:602px;top:139px;width:173px;height:1px;background:#ACA899"></div>
<div class="a" style="left:602px;top:140px;width:173px;height:1px;background:#FFFFFF"></div>
<div class="a gb" style="left:207px;top:347px;width:571px;height:120px;"></div>
<div class="a" style="left:213px;top:343px;width:68px;height:10px;background:#ECE9D8"></div>
<div class="a" style="left:216px;top:341px;letter-spacing:-0.27px;">Cartage Cost</div>
<div class="a" style="left:288px;top:343px;width:161px;height:10px;background:#ECE9D8"></div>
<div class="a in" style="left:289px;top:341px;width:13px;height:13px;"></div>
<div class="a" style="left:306px;top:341px;letter-spacing:0.00px;">Hide plants without settings.</div>
<div class="a" style="left:212px;top:389px;width:167px;height:67px;background:#FFFFE1"></div>
<div class="a" style="left:379px;top:389px;width:392px;height:67px;background:#fff"></div>
<div class="a" style="left:212px;top:405px;width:559px;height:1px;background:#C0C0C0"></div>
<div class="a" style="left:212px;top:422px;width:559px;height:1px;background:#C0C0C0"></div>
<div class="a" style="left:212px;top:439px;width:559px;height:1px;background:#C0C0C0"></div>
<div class="a" style="left:271px;top:389px;width:1px;height:67px;background:#C0C0C0"></div>
<div class="a" style="left:378px;top:389px;width:1px;height:67px;background:#C0C0C0"></div>
<div class="a" style="left:424px;top:389px;width:1px;height:67px;background:#C0C0C0"></div>
<div class="a" style="left:477px;top:389px;width:1px;height:67px;background:#C0C0C0"></div>
<div class="a" style="left:517px;top:389px;width:1px;height:67px;background:#C0C0C0"></div>
<div class="a" style="left:557px;top:389px;width:1px;height:67px;background:#C0C0C0"></div>
<div class="a" style="left:644px;top:389px;width:1px;height:67px;background:#C0C0C0"></div>
<div class="a" style="left:684px;top:389px;width:1px;height:67px;background:#C0C0C0"></div>
<div class="a" style="left:771px;top:357px;width:1px;height:100px;background:#000"></div>
<div class="a" style="left:212px;top:456px;width:560px;height:1px;background:#000"></div>
<div class="a" style="left:215px;top:359px;letter-spacing:-0.50px;">Code</div>
<div class="a" style="left:274px;top:359px;letter-spacing:-0.33px;">Name</div>
<div class="a" style="left:399px;top:359px;letter-spacing:0.00px;">Cart.</div>
<div class="a" style="left:400px;top:373px;letter-spacing:-0.33px;">Cost</div>
<div class="a" style="left:427px;top:359px;letter-spacing:0.00px;">Batch</div>
<div class="a" style="left:428px;top:373px;letter-spacing:-0.50px;">Code</div>
<div class="a" style="left:480px;top:359px;letter-spacing:-0.50px;">In</div>
<div class="a" style="left:480px;top:373px;letter-spacing:0.00px;">Stock</div>
<div class="a" style="left:520px;top:359px;letter-spacing:-0.50px;">Man</div>
<div class="a" style="left:520px;top:373px;letter-spacing:0.00px;">Batch</div>
<div class="a" style="left:561px;top:359px;letter-spacing:-0.08px;">Virtual Subst</div>
<div class="a" style="left:671px;top:359px;letter-spacing:-0.50px;">ml</div>
<div class="a" style="left:687px;top:359px;letter-spacing:-0.50px;">Split Mat</div>
<div class="a td" style="left:214px;top:389px;letter-spacing:0.00px;">5749</div>
<div class="a td" style="left:275px;top:389px;letter-spacing:0.00px;">Arglye</div>
<div class="a td" style="left:401px;top:389px;letter-spacing:-0.33px;">0.00</div>
<div class="a td" style="left:480px;top:389px;letter-spacing:-0.50px;">No</div>
<div class="a td" style="left:520px;top:389px;letter-spacing:-0.50px;">No</div>
<div class="a td" style="left:675px;top:389px;letter-spacing:0.00px;">0</div>
<div class="a td" style="left:214px;top:406px;letter-spacing:0.00px;">5785</div>
<div class="a td" style="left:274px;top:406px;letter-spacing:-0.33px;">Humpty Doo</div>
<div class="a td" style="left:401px;top:406px;letter-spacing:-0.33px;">0.00</div>
<div class="a td" style="left:480px;top:406px;letter-spacing:-0.50px;">No</div>
<div class="a td" style="left:520px;top:406px;letter-spacing:-0.50px;">No</div>
<div class="a td" style="left:560px;top:406px;letter-spacing:0.00px;">SAEA</div>
<div class="a" style="left:669px;top:406px;width:12px;height:13px;background:#316AC5"></div>
<div class="a" style="left:681px;top:406px;width:1px;height:13px;background:#000"></div>
<div class="a td" style="left:669px;top:405px;letter-spacing:-0.50px;color:#fff">25</div>
<div class="a td" style="left:214px;top:423px;letter-spacing:0.00px;">5840</div>
<div class="a td" style="left:274px;top:423px;letter-spacing:0.12px;">Darwin Laboratory</div>
<div class="a td" style="left:401px;top:423px;letter-spacing:-0.33px;">0.00</div>
<div class="a td" style="left:480px;top:423px;letter-spacing:-0.50px;">No</div>
<div class="a td" style="left:520px;top:423px;letter-spacing:-0.50px;">No</div>
<div class="a td" style="left:675px;top:423px;letter-spacing:0.00px;">0</div>
<div class="a td" style="left:214px;top:440px;letter-spacing:0.00px;">5842</div>
<div class="a td" style="left:274px;top:440px;letter-spacing:-0.14px;">Brompton</div>
<div class="a td" style="left:401px;top:440px;letter-spacing:-0.33px;">0.00</div>
<div class="a td" style="left:480px;top:440px;letter-spacing:-0.50px;">No</div>
<div class="a td" style="left:520px;top:440px;letter-spacing:-0.50px;">No</div>
<div class="a td" style="left:675px;top:440px;letter-spacing:0.00px;">0</div>
</div>
</body>
</html>
